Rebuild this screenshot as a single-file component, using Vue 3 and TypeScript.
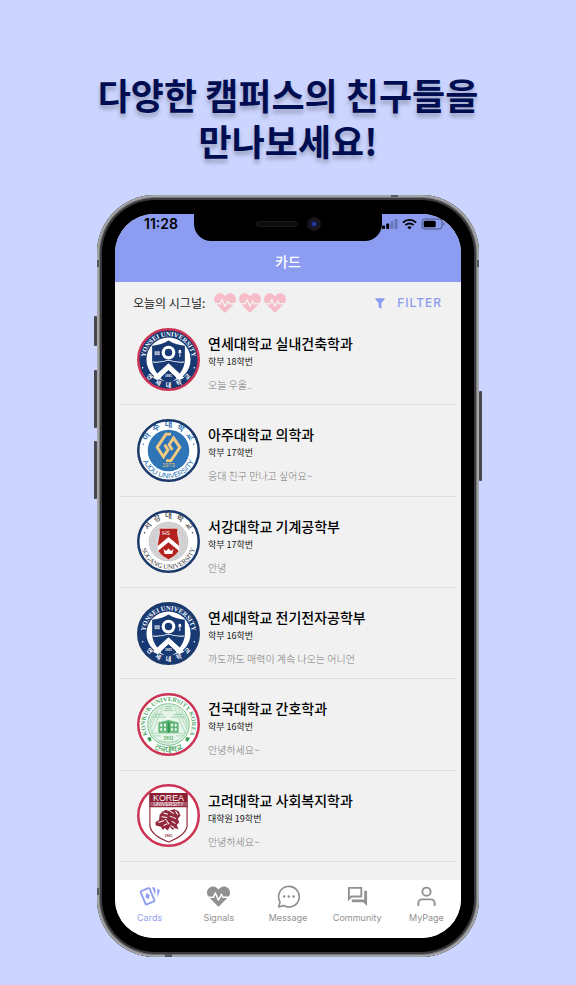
<script setup lang="ts">
interface Card {
  crest: 'yonsei' | 'ajou' | 'sogang' | 'konkuk' | 'korea'
  rim: string
  title: string
  year: string
  status: string
}

const crimson = '#cb3455'
const navy = '#1b3a6c'

const cards: Card[] = [
  { crest: 'yonsei', rim: crimson, title: '연세대학교 실내건축학과', year: '학부 18학번', status: '오늘 우울..' },
  { crest: 'ajou', rim: navy, title: '아주대학교 의학과', year: '학부 17학번', status: '응대 친구 만나고 싶어요~' },
  { crest: 'sogang', rim: navy, title: '서강대학교 기계공학부', year: '학부 17학번', status: '안녕' },
  { crest: 'yonsei', rim: navy, title: '연세대학교 전기전자공학부', year: '학부 16학번', status: '까도까도 매력이 계속 나오는 어니언' },
  { crest: 'konkuk', rim: crimson, title: '건국대학교 간호학과', year: '학부 16학번', status: '안녕하세요~' },
  { crest: 'korea', rim: crimson, title: '고려대학교 사회복지학과', year: '대학원 19학번', status: '안녕하세요~' },
]

const tabs: string[] = ['Cards', 'Signals', 'Message', 'Community', 'MyPage']

const heartPath =
  'M320.2 243.8l-49.7 99.4c-6 12.1-23.4 11.7-28.9-.6l-56.9-126.3-30 71.7H60.6l182.5 186.5c7.1 7.3 18.6 7.3 25.7 0L451.4 288H342.3l-22.1-44.2zM473.7 73.9l-2.4-2.5c-51.5-52.6-135.8-52.6-187.4 0L256 100l-27.9-28.5c-51.5-52.7-135.9-52.7-187.4 0l-2.4 2.4C-10.4 123.7-12.5 203 31 256h102.4l35.9-86.2c5.4-12.9 23.6-13.1 29.3-.4l58.2 129.3 49-97.9c5.9-11.8 22.7-11.8 28.6 0l27.6 55.2H481c43.5-53 41.4-132.3-7.3-182.1z'
</script>

<template>
  <main class="promo">
    <svg class="defs" width="0" height="0" aria-hidden="true">
      <defs>
        <path id="arc-top" d="M50 87A37 37 0 0 1 50 13A37 37 0 0 1 50 87" />
        <path id="arc-bottom" d="M50 6A44 44 0 0 0 50 94A44 44 0 0 0 50 6" />
      </defs>
    </svg>

    <h1 class="headline">다양한 캠퍼스의 친구들을<br />만나보세요!</h1>

    <div class="phone">
      <i class="key key-mute"></i>
      <i class="key key-up"></i>
      <i class="key key-down"></i>
      <i class="key key-power"></i>
      <i class="band band-left"></i>
      <i class="band band-right"></i>
      <i class="band band-low"></i>
      <i class="band band-top"></i>
      <i class="band band-bottom"></i>

      <div class="screen">
        <div class="notch"><i class="speaker"></i><i class="camera"></i></div>

        <header class="bar">
          <div class="status">
            <span class="clock">11:28</span>
            <svg class="indicators" viewBox="0 0 64 12" aria-hidden="true">
              <rect x="0" y="7.5" width="3" height="3.5" rx=".8" />
              <rect x="4.2" y="5.5" width="3" height="5.5" rx=".8" />
              <rect x="8.4" y="3.2" width="3" height="7.8" rx=".8" opacity=".25" />
              <rect x="12.6" y="1" width="3" height="10" rx=".8" opacity=".25" />
              <g fill="none" stroke="#000" stroke-width="1.9">
                <path d="M20.9 4.6a9.3 9.3 0 0 1 13.2 0" />
                <path d="M23.4 7.2a5.8 5.8 0 0 1 8.2 0" />
              </g>
              <path d="M27.5 11.4l-2.1-2.2a3 3 0 0 1 4.2 0z" />
              <rect x="40" y="1" width="20" height="10" rx="3" fill="none" stroke="#000" stroke-opacity=".45" />
              <rect x="41.7" y="2.7" width="12" height="6.6" rx="1.5" />
              <path d="M61.4 4.2v3.6a2 2 0 0 0 0-3.6z" opacity=".45" />
            </svg>
          </div>
          <h2 class="bar-title">카드</h2>
        </header>

        <section class="signals">
          <span class="signals-label">오늘의 시그널:</span>
          <span class="hearts">
            <svg v-for="n in 3" :key="n" class="heart" viewBox="0 0 512 512" aria-hidden="true">
              <path :d="heartPath" />
            </svg>
          </span>
          <button type="button" class="filter">
            <svg class="funnel" viewBox="0 0 10 11" aria-hidden="true">
              <path d="M.3.3h9.4v.9L6.4 5v5.7L3.7 9.4V5L.3 1.2z" />
            </svg>
            FILTER
          </button>
        </section>

        <ul class="list">
          <li v-for="card in cards" :key="card.title" class="row">
            <svg class="crest" viewBox="0 0 100 100" aria-hidden="true">
              <circle cx="50" cy="50" r="48" fill="#fff" />

              <g v-if="card.crest === 'yonsei'">
                <circle cx="50" cy="50" r="48" fill="#173a74" />
                <circle cx="50" cy="50" r="35" fill="#fff" />
                <text class="serif" fill="#fff" font-size="10.5" text-anchor="middle">
                  <textPath href="#arc-top" startOffset="50%">YONSEI UNIVERSITY</textPath>
                </text>
                <text class="hangul" fill="#fff" font-size="9.5" text-anchor="middle">
                  <textPath href="#arc-bottom" startOffset="50%">연&emsp;세&emsp;대&emsp;학&emsp;교</textPath>
                </text>
                <circle cx="9" cy="63" r="1.2" fill="#fff" />
                <circle cx="91" cy="63" r="1.2" fill="#fff" />
                <path d="M24 28Q39 27 50 20Q61 27 76 28V52Q74 74 50 86Q26 74 24 52z" fill="#173a74" />
                <path d="M25 54Q38 55 50 51Q62 55 75 54" fill="none" stroke="#fff" stroke-width="1.6" />
                <circle cx="50" cy="39" r="8.4" fill="none" stroke="#fff" stroke-width="5" />
                <path d="M28 37h8v6h-8z" fill="#cfd8e8" />
                <path d="M32 37v6M28 40h8" stroke="#173a74" stroke-width=".6" />
                <path d="M68 35v11M65.5 38.5h5" stroke="#fff" stroke-width="1.5" />
                <circle cx="68" cy="36.5" r="2" fill="#fff" />
                <path d="M50 56L75 79L67 83L50 67L33 83L25 79z" fill="#fff" />
                <path d="M50 67L63 80Q57 84 50 87Q43 84 37 80z" fill="#173a74" />
                <text class="serif" x="50" y="78" fill="#fff" font-size="5.5" text-anchor="middle">1885</text>
              </g>

              <g v-else-if="card.crest === 'ajou'">
                <circle cx="50" cy="50" r="33" fill="#2e74b6" />
                <text class="hangul" fill="#2e74b6" font-size="13" text-anchor="middle">
                  <textPath href="#arc-top" startOffset="50%">아&ensp;주&ensp;대&ensp;학&ensp;교</textPath>
                </text>
                <text class="sans" fill="#2e74b6" font-size="11.5" text-anchor="middle">
                  <textPath href="#arc-bottom" startOffset="50%">AJOU UNIVERSITY</textPath>
                </text>
                <circle cx="10" cy="40" r="1.2" fill="#2e74b6" />
                <circle cx="90" cy="40" r="1.2" fill="#2e74b6" />
                <g fill="none" stroke="#f4ca80" stroke-width="4.6">
                  <path d="M54 24H46L32 45L42 60L49 49L44 41" />
                  <path d="M46 66H54L68 45L58 30L51 41L56 49" />
                </g>
                <text class="sans" x="50" y="76" fill="#f4ca80" font-size="9" text-anchor="middle">1973</text>
              </g>

              <g v-else-if="card.crest === 'sogang'">
                <circle cx="50" cy="50" r="31.5" fill="#d5d5d7" />
                <g fill="none" stroke="#b5b5b8" stroke-width="1" stroke-dasharray="1.5 1">
                  <circle cx="50" cy="50" r="30.5" />
                  <circle cx="50" cy="50" r="26.5" />
                  <circle cx="50" cy="50" r="22.5" />
                </g>
                <text class="hangul light" fill="#3d3d42" font-size="12" text-anchor="middle">
                  <textPath href="#arc-top" startOffset="50%">서&ensp;강&ensp;대&ensp;학&ensp;교</textPath>
                </text>
                <text class="serif plain" fill="#3d3d42" font-size="11" text-anchor="middle">
                  <textPath href="#arc-bottom" startOffset="50%">SOGANG UNIVERSITY</textPath>
                </text>
                <circle cx="12" cy="36" r="1.2" fill="#3d3d42" />
                <circle cx="88" cy="36" r="1.2" fill="#3d3d42" />
                <path d="M35 29H65Q63 37 66 45Q69 58 66 66Q62 73 50 79Q38 73 34 66Q31 58 34 45Q37 37 35 29z" fill="#b3221f" stroke="#fff" stroke-width="1" />
                <path d="M50 43L67 57V65L50 51L33 65V57z" fill="#fff" />
                <path d="M42 62L46 65L50 61L54 65L58 62L56 70H44z" fill="#fff" />
                <text class="sans" x="46" y="39" fill="#fff" font-size="7.5" text-anchor="middle">IHS</text>
              </g>

              <g v-else-if="card.crest === 'konkuk'">
                <text class="serif" fill="#4fab68" font-size="10" text-anchor="middle">
                  <textPath href="#arc-top" startOffset="50%">KONKUK UNIVERSITY KOREA</textPath>
                </text>
                <text class="hangul" fill="#4fab68" font-size="10.5" text-anchor="middle">
                  <textPath href="#arc-bottom" startOffset="50%">건국대학교</textPath>
                </text>
                <path d="M16 71l6-1 1 6-4 1zM84 71l-6-1-1 6 4 1z" fill="#35a053" />
                <circle cx="50" cy="50" r="33" fill="#e6f4e9" stroke="#4fab68" stroke-width="1.2" />
                <g fill="none" stroke="#93cda2" stroke-width="1">
                  <circle cx="50" cy="50" r="29.5" />
                  <path d="M25 38H46M55 38H76M28 34H42M58 34H72M44 25H56M42 28H58M46 22H54" stroke="#6fbb84" />
                  <path d="M21 57L34 28M79 57L66 28M24 63L40 24M76 63L60 24M20 50L30 31M80 50L70 31" />
                  <path d="M22 64H78M25 68H38M62 68H75M34 76Q50 80 66 76" />
                </g>
                <path d="M34 47L50 43L66 47V63H34z" fill="#62b679" />
                <path d="M37 49h3v4h-3zM43 49h3v4h-3zM54 49h3v4h-3zM60 49h3v4h-3zM37 56h3v4h-3zM43 56h3v4h-3zM54 56h3v4h-3zM60 56h3v4h-3z" fill="#f2faf4" />
                <path d="M48.5 46h3v17h-3z" fill="#2f974c" />
                <text class="serif" x="50" y="74" fill="#4fab68" font-size="8" text-anchor="middle">1931</text>
              </g>

              <g v-else>
                <path d="M20.5 15H79.5V67Q77 82 50 92Q23 82 20.5 67z" fill="#fff" stroke="#8c2033" stroke-width="1.8" />
                <path d="M20 14.5H80V37H20z" fill="#8c2033" />
                <path d="M20 28.5H80V35.5H20z" fill="#a9566a" />
                <text class="sans" x="50" y="27" fill="#fff" font-size="14" text-anchor="middle">KOREA</text>
                <text class="sans" x="50" y="35" fill="#fff" font-size="8" text-anchor="middle">UNIVERSITY</text>
                <path d="M40 44L46 41L50 43L59 40L66 43L69 50L65 55L67 61L63 65L66 72L59 70L57 73L52 68L49 74L44 70L41 73L38 68L30 66L29 61L35 57L36 49z" fill="#93283c" />
                <path d="M42 46l7 2M52 43l7 4M61 43l4 6M39 52l9 1M52 51l10 4M34 61l9-3M47 58l4 6M55 59l6 4M42 66l6-3M53 66l6 3M44 56l3 1" stroke="#fff" stroke-width="1.6" fill="none" />
                <text class="serif" x="50" y="84" fill="#8c2033" font-size="6" text-anchor="middle">1905</text>
              </g>

              <circle cx="50" cy="50" r="48" fill="none" :stroke="card.rim" stroke-width="4" />
            </svg>
            <div class="info">
              <h3 class="title">{{ card.title }}</h3>
              <p class="year">{{ card.year }}</p>
              <p class="note">{{ card.status }}</p>
            </div>
          </li>
        </ul>

        <nav class="tabs">
          <a v-for="(tab, i) in tabs" :key="tab" href="#" class="tab" :class="{ active: i === 0 }">
            <svg v-if="i === 0" class="icon" viewBox="0 0 24 24" aria-hidden="true">
              <path
                fill="currentColor"
                fill-rule="evenodd"
                d="M11.19 2.25c-.26 0-.52.06-.77.15L3.06 5.45a2 2 0 0 0-1.09 2.6L6.93 20c.31.77 1.04 1.23 1.81 1.25.26 0 .53-.03.79-.15l7.37-3.05c.75-.31 1.21-1.05 1.23-1.8.01-.25-.04-.54-.13-.8L13 3.5a1.95 1.95 0 0 0-1.81-1.25zm0 1.97 4.98 12.02-7.39 3.06L3.8 7.29zM14.67 2.25l3.45 8.35V4.25a2 2 0 0 0-2-2zM20.13 3.79v9.03l2.43-5.86c.41-1.02-.06-2.18-1.09-2.6z"
              />
              <path fill="currentColor" d="M8.9 8.2l3.3 2.6-1.1 4.3-3.4-2.5z" />
            </svg>
            <svg v-else-if="i === 1" class="icon" viewBox="0 0 512 512" aria-hidden="true">
              <path fill="currentColor" :d="heartPath" />
            </svg>
            <svg v-else-if="i === 2" class="icon" viewBox="1 1 22 22" aria-hidden="true">
              <path fill="none" stroke="currentColor" stroke-width="1.6" stroke-linejoin="round" d="M3.9 17.2A9.9 9.9 0 1 1 7.4 20.7L2.6 21.9z" />
              <g fill="currentColor">
                <circle cx="7.8" cy="12" r="1.2" />
                <circle cx="12.3" cy="12" r="1.2" />
                <circle cx="16.8" cy="12" r="1.2" />
              </g>
            </svg>
            <svg v-else-if="i === 3" class="icon" viewBox="0 0 24 24" aria-hidden="true">
              <path fill="currentColor" d="M15 4v7H5.17L4 12.17V4h11m1-2H3c-.55 0-1 .45-1 1v14l4-4h10c.55 0 1-.45 1-1V3c0-.55-.45-1-1-1zm5 4h-2v9H6v2c0 .55.45 1 1 1h11l4 4V7c0-.55-.45-1-1-1z" />
            </svg>
            <svg v-else class="icon" viewBox="0 0 24 24" aria-hidden="true">
              <g fill="none" stroke="currentColor" stroke-width="2" stroke-linecap="round">
                <circle cx="12" cy="7" r="4.3" />
                <path d="M20.5 21v-2a4 4 0 0 0-4-4h-9a4 4 0 0 0-4 4v2" />
              </g>
            </svg>
            <span class="tab-label">{{ tab }}</span>
          </a>
        </nav>
      </div>
    </div>
  </main>
</template>

<style>
body {
  background: #ccd5ff;
}
</style>

<style scoped>
.promo {
  box-sizing: border-box;
  min-height: 100vh;
  padding: 71px 97px 28px;
  font-family: Inter, "Noto Sans CJK KR", sans-serif;
}

.defs {
  position: absolute;
}

.headline {
  margin: 0 -40px 32px;
  font-family: "Noto Sans CJK KR", sans-serif;
  font-size: 36px;
  font-weight: 700;
  line-height: 46px;
  text-align: center;
  color: #000d50;
  text-shadow: 0 4px 4px rgba(0, 0, 0, 0.25);
}

.phone {
  position: relative;
  box-sizing: border-box;
  aspect-ratio: 191 / 381;
  padding: 19px 18px;
  border-radius: 58px;
  background: #000;
  box-shadow:
    inset 0 0 0 2px #a5a5a5,
    inset 0 0 0 3px #77777a,
    inset 0 0 0 5px #3a3a3c;
}

.key {
  position: absolute;
  width: 3px;
  border-radius: 1px;
  background: #47484f;
}

.key-mute {
  left: -3px;
  top: 121px;
  height: 30px;
}

.key-up {
  left: -3px;
  top: 175px;
  height: 58px;
}

.key-down {
  left: -3px;
  top: 246px;
  height: 58px;
}

.key-power {
  right: -3px;
  top: 196px;
  height: 90px;
}

.band {
  position: absolute;
  width: 2px;
  height: 7px;
  background: #57575a;
}

.band-left {
  left: 0;
  top: 65px;
}

.band-right {
  right: 0;
  top: 65px;
}

.band-low {
  left: 0;
  bottom: 62px;
}

.band-top {
  top: 0;
  right: 81px;
  width: 7px;
  height: 2px;
}

.band-bottom {
  bottom: 0;
  left: 68px;
  width: 7px;
  height: 3px;
}

.screen {
  position: relative;
  display: flex;
  flex-direction: column;
  height: 100%;
  overflow: hidden;
  border-radius: 39px;
  background: #f1f1f1;
}

.notch {
  position: absolute;
  top: -1px;
  left: 50%;
  display: flex;
  align-items: center;
  justify-content: flex-end;
  gap: 9px;
  box-sizing: border-box;
  width: 188px;
  height: 28px;
  padding: 0 61px 6px 0;
  border-radius: 0 0 17px 17px;
  background: #000;
  transform: translateX(-50%);
}

.speaker {
  width: 42px;
  height: 6px;
  border-radius: 3px;
  border: 1px solid #1c1c1e;
  box-sizing: border-box;
  background: #0c0c0d;
}

.camera {
  box-sizing: border-box;
  width: 14px;
  height: 14px;
  border: 4px solid #17171b;
  border-radius: 50%;
  background: radial-gradient(circle, #3440c8 10%, #12225c 60%, #0b1838);
}

.bar {
  flex: none;
  height: 68px;
  background: #8c9cf1;
}

.status {
  display: flex;
  align-items: center;
  justify-content: space-between;
  height: 20px;
  padding: 0 15px 0 29px;
}

.clock {
  font-size: 14px;
  font-weight: 600;
  line-height: 20px;
}

.indicators {
  width: 64px;
  height: 12px;
}

.bar-title {
  margin: 18px 0 0;
  font-size: 14px;
  font-weight: 500;
  line-height: 20px;
  text-align: center;
  color: #fff;
}

.signals {
  display: flex;
  flex: none;
  align-items: center;
  box-sizing: border-box;
  height: 32px;
  padding: 10px 19px 0 18px;
}

.signals-label {
  font-family: "Noto Sans CJK KR", sans-serif;
  font-size: 12px;
  line-height: 20px;
  color: #222;
}

.hearts {
  display: flex;
  gap: 3px;
  margin-left: 9px;
}

.heart {
  width: 22px;
  height: 22px;
  fill: #f6bcc8;
}

.filter {
  display: flex;
  align-items: center;
  gap: 12px;
  margin-left: auto;
  padding: 0;
  border: 0;
  background: none;
  font: 500 12px/20px Inter, sans-serif;
  letter-spacing: 1px;
  color: #8c9cf1;
}

.funnel {
  width: 10px;
  height: 11px;
  fill: currentColor;
}

.list {
  display: flex;
  flex: 1;
  flex-direction: column;
  margin: 0;
  padding: 0 5px 18px;
  list-style: none;
}

.row {
  display: flex;
  flex: 1;
  align-items: center;
  gap: 8px;
  box-sizing: border-box;
  padding: 0 17px;
  border-bottom: 1px solid #dedee0;
}

.crest {
  flex: none;
  width: 63px;
  height: 63px;
}

.serif {
  font-family: "Liberation Serif", serif;
  font-weight: 700;
}

.plain {
  font-weight: 400;
}

.sans {
  font-family: "Liberation Sans", sans-serif;
}

.hangul {
  font-family: "Noto Sans CJK KR", sans-serif;
  font-weight: 700;
}

.light {
  font-weight: 500;
}

.info {
  align-self: flex-start;
  min-width: 0;
  padding-top: 19px;
  font-family: "Noto Sans CJK KR", sans-serif;
}

.title,
.year,
.note {
  margin: 0;
  white-space: nowrap;
}

.title {
  font-size: 14px;
  font-weight: 500;
  line-height: 20px;
  color: #000;
}

.year {
  font-size: 9px;
  font-weight: 400;
  line-height: 18px;
  color: #111;
}

.note {
  margin-top: 6px;
  font-size: 10px;
  font-weight: 300;
  line-height: 16px;
  color: #777;
}

.tabs {
  display: flex;
  flex: none;
  box-sizing: border-box;
  height: 58px;
  padding-top: 5px;
  background: #fff;
}

.tab {
  display: flex;
  flex: 1;
  flex-direction: column;
  align-items: center;
  gap: 4px;
  min-width: 0;
  color: #919191;
  text-decoration: none;
}

.tab.active {
  color: #909ff2;
}

.icon {
  width: 23px;
  height: 23px;
}

.tab-label {
  font-size: 9px;
  line-height: 12px;
}
</style>
